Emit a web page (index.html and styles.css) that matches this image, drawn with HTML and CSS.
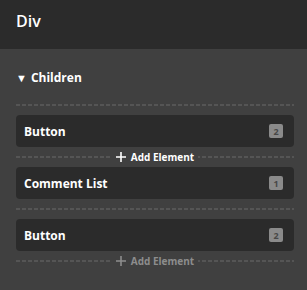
FILE: index.html
```html
<!DOCTYPE html>
<html lang="en">
<head>
  <meta charset="UTF-8">
  <title>Div</title>
  <link rel="stylesheet" href="styles.css">
</head>
<body>
  <div class="cabecera">Div</div>

  <!-- Lista de hijos del elemento -->
  <div class="cuerpo">
    <div class="titulo"><span class="flecha">&#9660;</span> Children</div>

    <div class="zona"></div>
    <div class="hijo">
      <span>Button</span>
      <span class="numero">2</span>
    </div>
    <div class="zona">
      <span class="anadir activo">
        <svg width="10" height="10" viewBox="0 0 10 10"><path d="M5 0v10M0 5h10" stroke="currentColor" stroke-width="1.6"/></svg>
        Add Element
      </span>
    </div>
    <div class="hijo">
      <span>Comment List</span>
      <span class="numero">1</span>
    </div>
    <div class="zona"></div>
    <div class="hijo">
      <span>Button</span>
      <span class="numero">2</span>
    </div>
    <div class="zona">
      <span class="anadir">
        <svg width="10" height="10" viewBox="0 0 10 10"><path d="M5 0v10M0 5h10" stroke="currentColor" stroke-width="1.6"/></svg>
        Add Element
      </span>
    </div>
  </div>
</body>
</html>
```

FILE: styles.css
```css
body {
  margin: 0;
  background: #404040;
  color: #fff;
  font-family: 'Open Sans', sans-serif;
  height: 290px;
  overflow: hidden;
}

.cabecera {
  background: #2b2b2b;
  height: 49px;
  box-sizing: border-box;
  padding: 10px 16px 0 16px;
  font-size: 16px;
  font-weight: 600;
}

.cuerpo {
  padding: 0 13px 0 16px;
}

.titulo {
  height: 46px;
  display: flex;
  align-items: center;
  padding-top: 10px;
  box-sizing: border-box;
  font-size: 12px;
  font-weight: 700;
}

.flecha {
  font-size: 11px;
  margin-right: 4px;
}

.zona {
  height: 20px;
  display: flex;
  align-items: center;
  justify-content: center;
  background: linear-gradient(to right, #555 4px, transparent 4px) 0 9px / 6px 2px repeat-x;
}

.anadir {
  background: #404040;
  padding: 0 4px;
  display: flex;
  align-items: center;
  gap: 5px;
  font-size: 10px;
  font-weight: 700;
  color: #8d8d8d;
}

.anadir.activo {
  color: #fff;
}

.hijo {
  height: 32px;
  background: #2b2b2b;
  border-radius: 4px;
  display: flex;
  align-items: center;
  justify-content: space-between;
  padding: 0 11px 0 8px;
  font-size: 12px;
  font-weight: 700;
}

.numero {
  width: 14px;
  height: 14px;
  background: #8a8a8a;
  color: #474747;
  border-radius: 2px;
  font-size: 9px;
  display: flex;
  align-items: center;
  justify-content: center;
}
```
